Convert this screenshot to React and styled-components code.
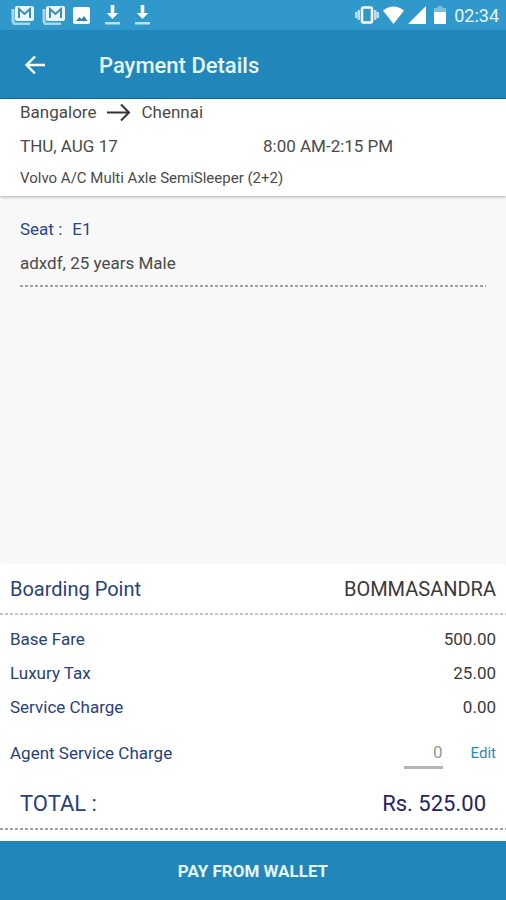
import styled, { createGlobalStyle } from 'styled-components';

const GlobalStyle = createGlobalStyle`
    * {
        box-sizing: border-box;
    }

    body {
        margin: 0;
        background: #f8f8f8;
        color: #4a4a4a;
        font-family: Roboto, sans-serif;
        font-size: 17px;
    }
`;

const Screen = styled.div`
    display: flex;
    flex-direction: column;
    min-height: 100vh;
`;

const StatusBar = styled.div`
    display: flex;
    align-items: center;
    justify-content: space-between;
    height: 30px;
    padding: 0 7px 0 11px;
    background: #3198cb;
    color: #fff;
`;

const StatusGroup = styled.div`
    display: flex;
    align-items: center;
    gap: ${({ $gap }) => $gap}px;

    svg {
        display: block;
    }
`;

const Clock = styled.time`
    font-size: 18px;
    color: #e4f5fd;
`;

const Toolbar = styled.header`
    display: flex;
    align-items: center;
    gap: 50px;
    height: 69px;
    padding: 3px 21px 0;
    border-bottom: 1px solid #17699a;
    background: #2186b9;
    color: #fff;
`;

const BackButton = styled.button`
    display: flex;
    padding: 0;
    border: 0;
    background: none;
    color: inherit;
    cursor: pointer;
`;

const Title = styled.h1`
    margin: 0;
    font-size: 22px;
    font-weight: 500;
    line-height: 32px;
    color: #e6f5fc;
`;

const Trip = styled.section`
    padding: 0 20px 7px;
    background: #fff;
    box-shadow: 0 1px 3px rgba(0, 0, 0, 0.3);
`;

const Route = styled.div`
    display: flex;
    align-items: center;
    gap: 10px;
    height: 26px;
`;

const Schedule = styled.div`
    display: grid;
    grid-template-columns: 1fr 1fr;
    column-gap: 20px;
    line-height: 42px;
`;

const Coach = styled.div`
    font-size: 15px;
    line-height: 22px;
`;

const Passengers = styled.section`
    flex: 1;
    padding: 16px 20px;
`;

const Passenger = styled.div`
    margin-bottom: 5px;
    line-height: 34px;
`;

const Seat = styled.div`
    display: flex;
    gap: 10px;
    color: #27478a;
`;

const Divider = styled.hr`
    height: 2px;
    margin: 0;
    border: 0;
    background: repeating-linear-gradient(
        90deg,
        ${({ $color }) => $color} 0 3px,
        transparent 3px 5px
    );
`;

const Fare = styled.section`
    padding-bottom: 11px;
    border-radius: 4px 4px 0 0;
    background: #fff;
`;

const Row = styled.div`
    display: flex;
    align-items: center;
    justify-content: space-between;
    height: ${({ $height }) => $height}px;
    padding: 0 ${({ $inset }) => $inset || 10}px;
    font-size: ${({ $size }) => $size || 17}px;
`;

const Charges = styled.div`
    padding: 7px 0 4px;
`;

const Label = styled.label`
    color: #27417f;
`;

const Amount = styled.output`
    color: ${({ $color }) => $color || '#3a3a3a'};
`;

const ChargeEditor = styled.div`
    display: flex;
    align-items: center;
    gap: 28px;
`;

const ChargeInput = styled.input`
    width: 39px;
    height: 32px;
    padding: 0;
    border: 0;
    border-bottom: 3px solid #b5b5b5;
    border-radius: 0;
    background: none;
    color: #999;
    font: inherit;
    text-align: right;
`;

const EditButton = styled.button`
    padding: 0;
    border: 0;
    background: none;
    color: #2e8abb;
    font: inherit;
    font-size: 15px;
    cursor: pointer;
`;

const PayButton = styled.button`
    height: 59px;
    border: 0;
    background: #2186b9;
    color: #e6f5fc;
    font: inherit;
    font-weight: 700;
    cursor: pointer;
`;

const MailIcon = () => (
    <svg width="24" height="20" viewBox="0 0 24 20" aria-hidden="true">
        <path
            d="M2 4v12a3 3 0 0 0 3 3h14"
            fill="none"
            stroke="#a9d5ec"
            strokeWidth="3"
        />
        <rect x="4" y="1" width="19" height="15" rx="2" fill="#e9f6fd" />
        <path
            d="M8 13V4l5.500 5L19 4v9"
            fill="none"
            stroke="#3f8db5"
            strokeWidth="2"
        />
    </svg>
);

const ImageIcon = () => (
    <svg width="17" height="17" viewBox="0 0 17 17" aria-hidden="true">
        <rect width="17" height="17" rx="2" fill="#fff" />
        <path d="M3 14l3.500-4 2 2.300L11 9l3.500 5z" fill="#2f83b0" />
    </svg>
);

const DownloadIcon = () => (
    <svg width="15" height="20" viewBox="0 0 15 20" aria-hidden="true">
        <path d="M5.700 0h3.600v8h3.900L7.500 14 1.800 8h3.900z" fill="#fff" />
        <path d="M0 17h15v2.500H0z" fill="#b9e0f4" />
    </svg>
);

const VibrateIcon = () => (
    <svg width="24" height="18" viewBox="0 0 24 18" aria-hidden="true">
        <path
            d="M1.200 6v6M3.800 4v10M20.200 4v10M22.800 6v6"
            stroke="#b9dff2"
            strokeWidth="2.400"
        />
        <rect
            x="7"
            y="1.500"
            width="10"
            height="15"
            rx="1.500"
            fill="none"
            stroke="#fff"
            strokeWidth="2.500"
        />
    </svg>
);

const WifiIcon = () => (
    <svg width="21" height="18" viewBox="0 0 21 18" aria-hidden="true">
        <path d="M0 4.500Q10.500-3.500 21 4.500L10.500 18z" fill="#fff" />
    </svg>
);

const SignalIcon = () => (
    <svg width="18" height="18" viewBox="0 0 18 18" aria-hidden="true">
        <path d="M18 0v18H0z" fill="#fff" />
    </svg>
);

const BatteryIcon = () => (
    <svg width="12" height="18" viewBox="0 0 12 18" aria-hidden="true">
        <path d="M3.500 0h5v2H12v4H0V2h3.500z" fill="#7dbddd" />
        <path d="M0 6h12v11a1 1 0 0 1-1 1H1a1 1 0 0 1-1-1z" fill="#fff" />
    </svg>
);

const BackIcon = () => (
    <svg width="28" height="28" viewBox="0 0 28 28" aria-hidden="true">
        <path
            d="M24 13H6M14 4.500L5.500 13l8.500 8.500"
            fill="none"
            stroke="currentColor"
            strokeWidth="2.400"
        />
    </svg>
);

const RouteIcon = () => (
    <svg width="25" height="18" viewBox="0 0 25 18" role="img" aria-label="to">
        <path
            d="M1 9.500h22M15 1.500l8 8-8 8"
            fill="none"
            stroke="#333"
            strokeWidth="2"
        />
    </svg>
);

const charges = [
    { id: 'base', name: 'Base Fare', amount: '500.00' },
    { id: 'tax', name: 'Luxury Tax', amount: '25.00' },
    { id: 'service', name: 'Service Charge', amount: '0.00' },
];

const App = () => (
    <Screen>
        <GlobalStyle />
        <StatusBar>
            <StatusGroup $gap={15}>
                <StatusGroup $gap={7}>
                    <MailIcon />
                    <MailIcon />
                    <ImageIcon />
                </StatusGroup>
                <DownloadIcon />
                <DownloadIcon />
            </StatusGroup>
            <StatusGroup $gap={8}>
                <StatusGroup $gap={4}>
                    <VibrateIcon />
                    <WifiIcon />
                    <SignalIcon />
                </StatusGroup>
                <BatteryIcon />
                <Clock>02:34</Clock>
            </StatusGroup>
        </StatusBar>
        <Toolbar>
            <BackButton type="button" aria-label="Back">
                <BackIcon />
            </BackButton>
            <Title>Payment Details</Title>
        </Toolbar>
        <Trip>
            <Route>
                <span>Bangalore</span>
                <RouteIcon />
                <span>Chennai</span>
            </Route>
            <Schedule>
                <span>THU, AUG 17</span>
                <span>8:00 AM-2:15 PM</span>
            </Schedule>
            <Coach>Volvo A/C Multi Axle SemiSleeper (2+2)</Coach>
        </Trip>
        <Passengers>
            <Passenger>
                <Seat>
                    <span>Seat :</span>
                    <span>E1</span>
                </Seat>
                adxdf, 25 years Male
            </Passenger>
            <Divider $color="#a2a2a2" />
        </Passengers>
        <Fare>
            <Row $height={49} $size={20}>
                <Label htmlFor="boarding">Boarding Point</Label>
                <Amount id="boarding">BOMMASANDRA</Amount>
            </Row>
            <Divider $color="#c4c4c4" />
            <Charges>
                {charges.map(({ id, name, amount }) => (
                    <Row key={id} $height={34}>
                        <Label htmlFor={id}>{name}</Label>
                        <Amount id={id}>{amount}</Amount>
                    </Row>
                ))}
                <Row $height={58}>
                    <Label htmlFor="agent">Agent Service Charge</Label>
                    <ChargeEditor>
                        <ChargeInput id="agent" defaultValue="0" />
                        <EditButton type="button">Edit</EditButton>
                    </ChargeEditor>
                </Row>
                <Row $height={42} $inset={20} $size={22}>
                    <Label htmlFor="total">TOTAL :</Label>
                    <Amount id="total" $color="#1f2467">
                        Rs. 525.00
                    </Amount>
                </Row>
            </Charges>
            <Divider $color="#a2a2a2" />
        </Fare>
        <PayButton type="button">PAY FROM WALLET</PayButton>
    </Screen>
);

export default App;
